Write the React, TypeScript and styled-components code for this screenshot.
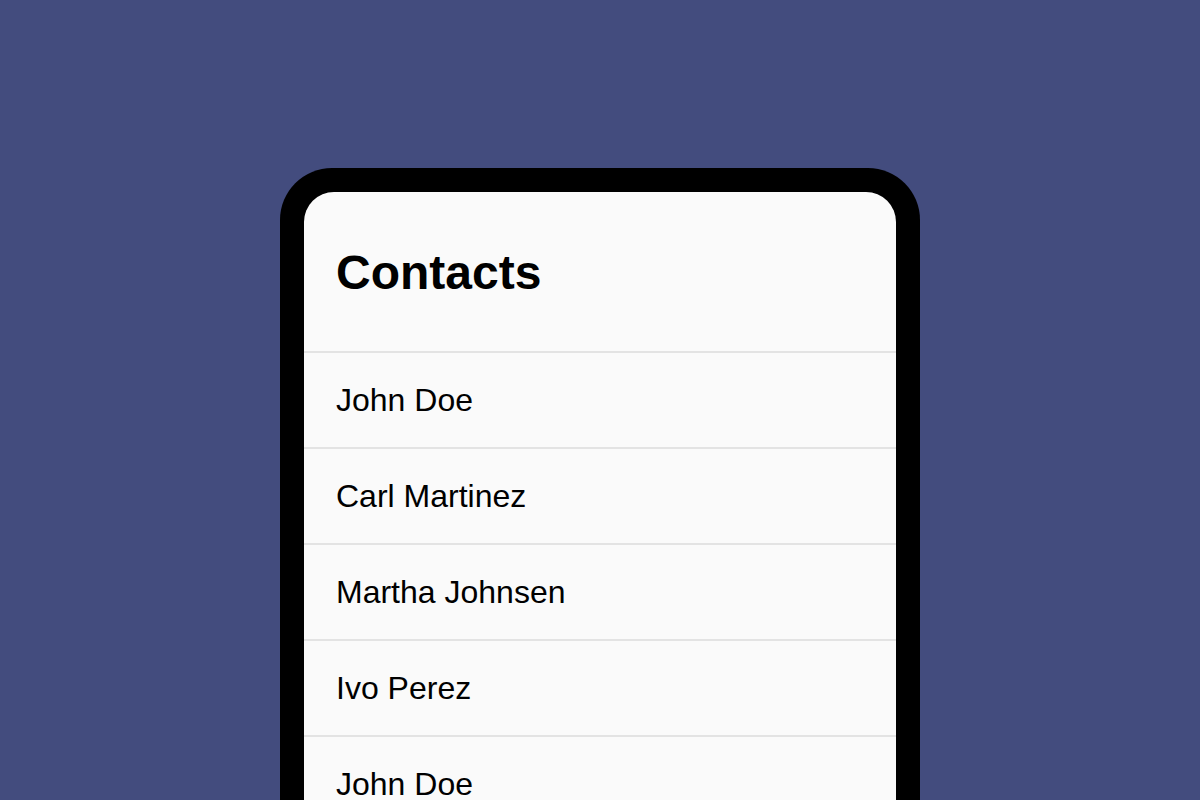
import styled, { createGlobalStyle } from "styled-components";

const contacts = [
  "John Doe",
  "Carl Martinez",
  "Martha Johnsen",
  "Ivo Perez",
  "John Doe",
  "Carl Martinez",
];

const GlobalStyle = createGlobalStyle`
  html, body {
    margin: 0;
    padding: 0;
    height: 100%;
    overflow: hidden;
    background: #434c7e;
  }
  body {
    font-family: "Liberation Sans", Arial, Helvetica, sans-serif;
  }
`;

function App() {
  return (
    <>
      <GlobalStyle />
      <Page>
        <Phone>
          <Screen>
            <Header>
              <Title>Contacts</Title>
            </Header>
            <List>
              {contacts.map((name, i) => (
                <Row key={i}>{name}</Row>
              ))}
            </List>
          </Screen>
        </Phone>
      </Page>
    </>
  );
}

const Page = styled.div`
  height: 800px;
  display: flex;
  justify-content: center;
  padding-top: 168px;
  box-sizing: border-box;
  overflow: hidden;
`;

const Phone = styled.div`
  width: 640px;
  height: 720px;
  flex-shrink: 0;
  box-sizing: border-box;
  background: #000;
  padding: 24px 24px 0;
  border-radius: 52px 52px 0 0;
`;

const Screen = styled.div`
  height: 100%;
  background: #fafafa;
  border-radius: 30px 30px 0 0;
  overflow: hidden;
`;

const Header = styled.header`
  padding: 53px 32px 50px;
`;

const Title = styled.h1`
  margin: 0;
  font-size: 48px;
  line-height: 56px;
  font-weight: 700;
  color: #000;
`;

const List = styled.ul`
  list-style: none;
  margin: 0;
  padding: 0;
`;

const Row = styled.li`
  height: 94px;
  display: flex;
  align-items: center;
  padding: 0 32px;
  border-top: 2px solid #e3e3e3;
  font-size: 32px;
  color: #000;
`;

export default App;
